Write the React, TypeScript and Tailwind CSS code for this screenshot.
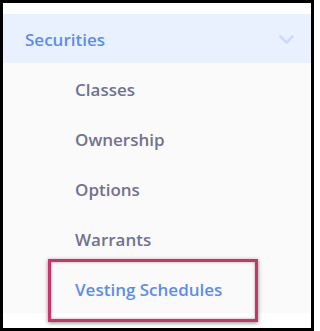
const SUB_ITEMS = ["Classes", "Ownership", "Options", "Warrants"];

export default function App() {
  return (
    <div
      className="w-[314px] h-[331px] border-[3px] border-black bg-white overflow-hidden"
      style={{ fontFamily: '"Open Sans", "Noto Sans", sans-serif' }}
    >
      <div className="h-[11px]" />
      {/* expanded section header */}
      <div className="h-[49px] bg-[#eaf1fe] flex items-center justify-between pl-[22px] pr-[17px]">
        <span className="text-[17px] font-semibold text-[#5b8def] pt-[2px]">Securities</span>
        <svg width="15" height="10" viewBox="0 0 15 10" className="mt-[2px]">
          <polyline
            points="1.5,1.5 7.5,7.5 13.5,1.5"
            fill="none"
            stroke="#c9dafb"
            strokeWidth="2.6"
            strokeLinecap="round"
            strokeLinejoin="round"
          />
        </svg>
      </div>
      <div className="h-[250px] bg-[#fafafa] pt-[2px] mr-[1px]">
        {SUB_ITEMS.map((label) => (
          <div key={label} className="h-[50px] flex items-center pl-[72px]">
            <span className="text-[17px] font-semibold text-[#72728f]">{label}</span>
          </div>
        ))}
        <div className="relative h-[50px] flex items-center pl-[72px]">
          <span className="text-[17px] font-semibold text-[#5b8def]">Vesting Schedules</span>
          {/* highlight annotation */}
          <div className="absolute left-[45px] top-[-6px] w-[210px] h-[63px] border-[3.5px] border-[#c9356a] shadow-[0_1px_4px_rgba(0,0,0,0.45),inset_0_0_3px_rgba(0,0,0,0.35)]" />
        </div>
      </div>
    </div>
  );
}
